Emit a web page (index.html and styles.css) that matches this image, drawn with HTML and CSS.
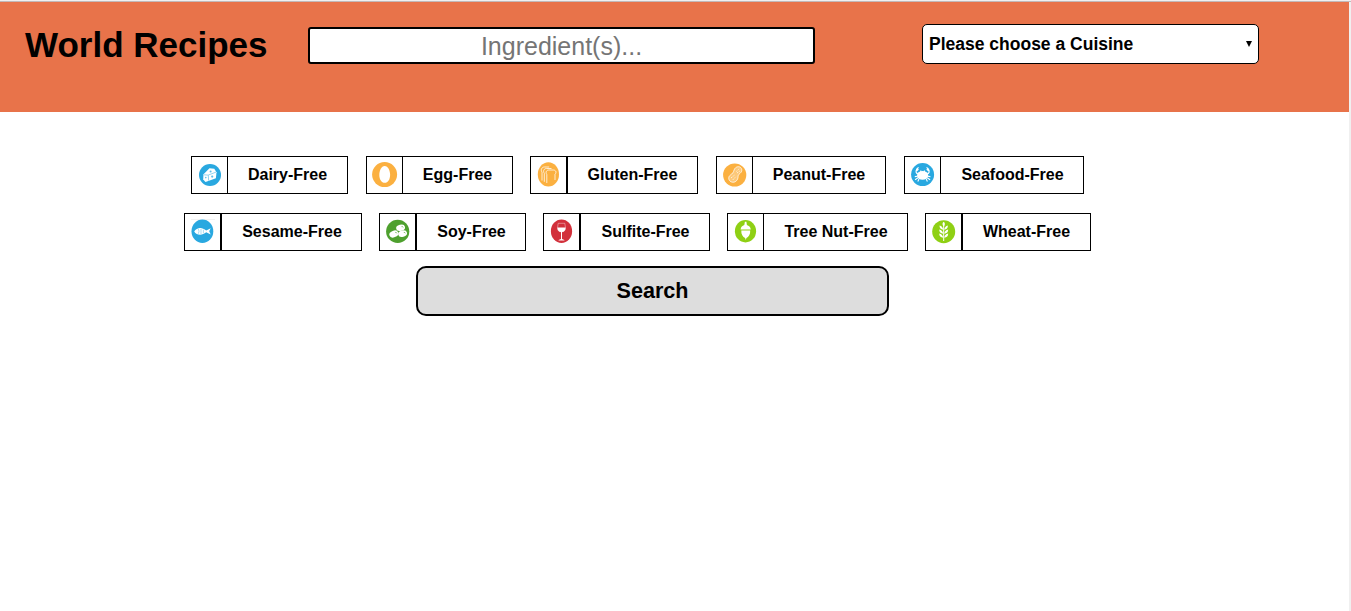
FILE: index.html
```html
<!DOCTYPE html>
<html lang="en">
<head>
<meta charset="utf-8">
<title>World Recipes</title>
<link rel="stylesheet" href="styles.css">
</head>
<body>
<div class="top-rule"></div>
<div class="page">
<header class="header">
  <h1 class="title">World Recipes</h1>
  <input class="ingredients" type="text" placeholder="Ingredient(s)...">
  <div class="cuisine">
    <select class="cuisine-select"><option>Please choose a Cuisine</option></select>
    <svg class="cuisine-arrow" viewBox="0 0 6 6"><path d="M0 0h6L3 6z"/></svg>
  </div>
</header>
<main class="main">
  <div class="row row-one">
    <div class="tag dairy">
      <svg class="icon" viewBox="0 0 35 36"><circle cx="18" cy="18" r="11" fill="#29a8e0"/><path d="M11.5 17.3 17.5 11.2l4.8.6 2.2 3.4-.6 6L13.5 25l-2.3-2.6z" fill="#fff"/><path d="M11.8 17.8l4.4.3 7.8-3M16.3 18.3l.3 5.2" fill="none" stroke="#29a8e0" stroke-width=".5"/><g fill="#29a8e0" fill-opacity=".75"><circle cx="18.6" cy="14.4" r="1"/><circle cx="20.2" cy="19.6" r="1.1"/><circle cx="13.8" cy="20.6" r=".8"/></g></svg>
      <span class="label">Dairy-Free</span>
    </div>
    <div class="tag egg">
      <svg class="icon" viewBox="0 0 35 36"><circle cx="17.6" cy="17.6" r="12.5" fill="#fbb040"/><path d="M17.7 9c3.3 0 5.4 4.6 5.4 9s-2.2 7.8-5.4 7.8-5.4-3.4-5.4-7.8S14.4 9 17.7 9z" fill="#fff"/></svg>
      <span class="label">Egg-Free</span>
    </div>
    <div class="tag gluten thick">
      <svg class="icon" viewBox="0 0 35 36"><ellipse cx="17.4" cy="17.4" rx="10.6" ry="12.2" fill="#fbb040"/><g fill="none" stroke="#fff" stroke-opacity=".85" stroke-width=".9"><path d="M11 23.5v-8.3c-1.6-2.4-.2-5.2 2.4-5.2h4.8"/><path d="M13.3 24.8v-8.4c-1.6-2.4-.3-4.9 2.2-4.9h5"/><path d="M15.8 26v-8.4c-1.6-2.4-.3-4.6 2.1-4.6h4.4c2.7 0 3.5 2.6 1.7 4.3V23"/></g></svg>
      <span class="label">Gluten-Free</span>
    </div>
    <div class="tag peanut">
      <svg class="icon" viewBox="0 0 35 36"><circle cx="17.7" cy="18" r="11.6" fill="#fbb040"/><path d="M17.2 12.8c1.2-3.4 5.6-4.2 7.1-1.4 1.5 3-.9 4.6-2.7 6.3-.8 1-.3 2.4-.9 4-1 2.9-4 4.3-6.6 3.1-3-1.5-3-5.1-.7-6.8 2-1.3 3-2.6 3.8-5.2z" fill="#fff" fill-opacity=".3" stroke="#fff" stroke-opacity=".85" stroke-width=".9"/><path d="M19.3 14.5l3.2-3M20 16l3.5-2.4M14 21l3.7-3M15.8 22.9l3-3.2" stroke="#fff" stroke-width=".7" stroke-dasharray="1.3 .8"/></svg>
      <span class="label">Peanut-Free</span>
    </div>
    <div class="tag seafood nudged">
      <svg class="icon" viewBox="0 0 35 36"><circle cx="17.6" cy="17.6" r="11.5" fill="#29a8e0"/><ellipse cx="17.6" cy="18.4" rx="5.6" ry="4.4" fill="#fff"/><g fill="none" stroke="#fff" stroke-width="1.1"><path d="M13.4 17c-2.6-.5-3-2.7-1.6-4.6M21.8 17c2.6-.5 3-2.7 1.6-4.6M15.8 15.5v-2M19.4 15.5v-2"/><path d="M12.5 19.3l-2.7.3M13 20.8l-2.9 2M14 22l-1.2 2.4M22.7 19.3l2.7.3M22.2 20.8l2.9 2M21.2 22l1.2 2.4"/></g><path d="M10.9 13.8c0-2.6 1.3-3.8 3.2-3.6l-1.1 1.7 1 .5-2.2 2zM24.3 13.8c0-2.6-1.3-3.8-3.2-3.6l1.1 1.7-1 .5 2.2 2z" fill="#fff"/></svg>
      <span class="label">Seafood-Free</span>
    </div>
  </div>
  <div class="row row-two">
    <div class="tag sesame thick nudged">
      <svg class="icon" viewBox="0 0 35 36"><path d="M6 5.5h24" stroke="#e9e9e9" stroke-width=".6"/><ellipse cx="17.4" cy="17.3" rx="10.9" ry="11.7" fill="#29a8e0"/><path d="M9.2 17.5c2.4-4.4 8-4.8 12-1l4.5-2.3-1.5 3.1 1.5 3.2-4.5-2.2c-4 3.5-9.6 3.2-12-.8z" fill="#fff"/><path d="M13.3 14.7q1.4 2.6 0 5.1M16 15v5M18.4 15.7v3.5" fill="none" stroke="#29a8e0" stroke-width=".4"/></svg>
      <span class="label">Sesame-Free</span>
    </div>
    <div class="tag soy thick nudged">
      <svg class="icon" viewBox="0 0 35 36"><circle cx="17.7" cy="17.4" r="11.6" fill="#4ea02e"/><g fill="#fff"><ellipse cx="20.6" cy="13.8" rx="4.5" ry="3.1" transform="rotate(-15 20.6 13.8)"/><ellipse cx="13.8" cy="20" rx="4.6" ry="3.3" transform="rotate(-20 13.8 20)"/><ellipse cx="22.6" cy="19.7" rx="4.5" ry="3.2" transform="rotate(-15 22.6 19.7)"/></g><path d="M21.6 12.6q1.2-.2 1.6.8M15.3 18.4q1.2-.2 1.5.9M23.8 18.4q1.2-.2 1.5.9" fill="none" stroke="#4ea02e" stroke-width=".7"/></svg>
      <span class="label">Soy-Free</span>
    </div>
    <div class="tag sulfite thick nudged">
      <svg class="icon" viewBox="0 0 35 36"><ellipse cx="17.5" cy="17.2" rx="10.6" ry="11.8" fill="#d2303b"/><path d="M14.2 9.3h6.6l.7 4.6c.2 2.5-1.5 4-4 4s-4.2-1.5-4-4z" fill="none" stroke="#fff" stroke-opacity=".65" stroke-width=".6"/><path d="M13.5 13.5h8c.3 2.8-1.5 4.4-3.5 4.6V25l2.4.9v.7h-5.8v-.7l2.4-.9v-6.9c-2-.2-3.8-1.8-3.5-4.6z" fill="#fff"/></svg>
      <span class="label">Sulfite-Free</span>
    </div>
    <div class="tag treenut nudged">
      <svg class="icon" viewBox="0 0 35 36"><ellipse cx="17.5" cy="17.2" rx="10.6" ry="11.2" fill="#8fd014"/><path d="M16.9 7.8h1.5l.5 3.2c2 .6 3.6 2.2 3.9 4.4H12.6c.3-2.2 1.7-3.8 3.7-4.4zM13.3 16.4h8.9c.3 3.9-1.6 6.4-3.8 7.7l-.6 2-.7-2c-2.2-1.3-4.1-3.8-3.8-7.7z" fill="#fff"/></svg>
      <span class="label">Tree Nut-Free</span>
    </div>
    <div class="tag wheat thick">
      <svg class="icon" viewBox="0 0 35 36"><circle cx="17.7" cy="17.7" r="11.5" fill="#8fd014"/><path d="M17.7 11v16" stroke="#fff" stroke-width="1"/><path d="M17.7 7.8q2.4 2.1 0 4.8-2.4-2.7 0-4.8zM17.2 15.8q-3.7-.7-3.7-4.4 3.3.7 3.7 4.4zM18.2 15.8q3.7-.7 3.7-4.4-3.3.7-3.7 4.4zM17.2 19.8q-4-.7-4-4.4 3.6.7 4 4.4zM18.2 19.8q4-.7 4-4.4-3.6.7-4 4.4zM17.2 23.8q-4-.7-4-4.4 3.6.7 4 4.4zM18.2 23.8q4-.7 4-4.4-3.6.7-4 4.4z" fill="#fff"/></svg>
      <span class="label">Wheat-Free</span>
    </div>
  </div>
  <button class="search" type="button">Search</button>
</main>
</div>
</body>
</html>
```
FILE: styles.css
```css
* { box-sizing: border-box; }

body {
  margin: 0;
  height: 611px;
  overflow: hidden;
  background: #fff;
  color: #000;
  font-family: "Liberation Sans", Arial, sans-serif;
}

.top-rule {
  height: 2px;
  background: #c3b9b9;
  border-top: 1px solid #f0f0f0;
}

.page {
  height: 609px;
  border-right: 2px solid #f0f0f0;
}

.header {
  display: flex;
  align-items: flex-start;
  height: 110px;
  padding-left: 25px;
  background: #e8734a;
}

.title {
  width: 283px;
  margin: 23px 0 0;
  font-size: 35px;
  line-height: 40px;
  white-space: nowrap;
}

.ingredients {
  width: 507px;
  height: 37px;
  margin: 25px 0 0;
  padding: 1px 0 0;
  border: 2px solid #000;
  border-radius: 3px;
  background: #fff;
  font: 25px "Liberation Sans", Arial, sans-serif;
  text-align: center;
}

.ingredients::placeholder { color: #757575; }

.cuisine {
  position: relative;
  width: 337px;
  height: 40px;
  margin: 22px 0 0 107px;
}

.cuisine-select {
  display: block;
  width: 100%;
  height: 100%;
  padding: 0 0 0 6px;
  appearance: none;
  border: 1px solid #000;
  border-radius: 5px;
  background: #fff;
  color: #000;
  font: bold 17.5px "Liberation Sans", Arial, sans-serif;
}

.cuisine-arrow {
  position: absolute;
  top: 17px;
  right: 7px;
  width: 6px;
  height: 6px;
}

.main { padding-top: 44px; }

.row {
  display: flex;
  height: 38px;
}

.row-one { gap: 18px; padding-left: 191px; }
.row-two { gap: 17px; padding-left: 184px; margin-top: 19px; }

.tag {
  display: flex;
  flex: none;
  border: 1px solid #000;
}

.icon {
  flex: none;
  width: 35px;
  height: 36px;
}

.label {
  flex: 1;
  border-left: 1px solid #000;
  font-size: 16px;
  font-weight: bold;
  line-height: 35px;
  text-align: center;
  white-space: nowrap;
}

.thick .label { border-left-width: 2px; }
.nudged .label { padding-left: 1px; }

.dairy { width: 157px; }
.egg { width: 147px; }
.gluten { width: 168px; margin-left: -1px; }
.peanut { width: 170px; }
.seafood { width: 180px; }
.sesame { width: 178px; }
.soy { width: 147px; }
.sulfite { width: 167px; }
.treenut { width: 181px; }
.wheat { width: 166px; }

.search {
  display: block;
  width: 473px;
  height: 50px;
  margin: 15px 0 0 416px;
  padding: 0;
  border: 2px solid #000;
  border-radius: 10px;
  background: #ddd;
  color: #000;
  font: bold 21.6px "Liberation Sans", Arial, sans-serif;
}
```
